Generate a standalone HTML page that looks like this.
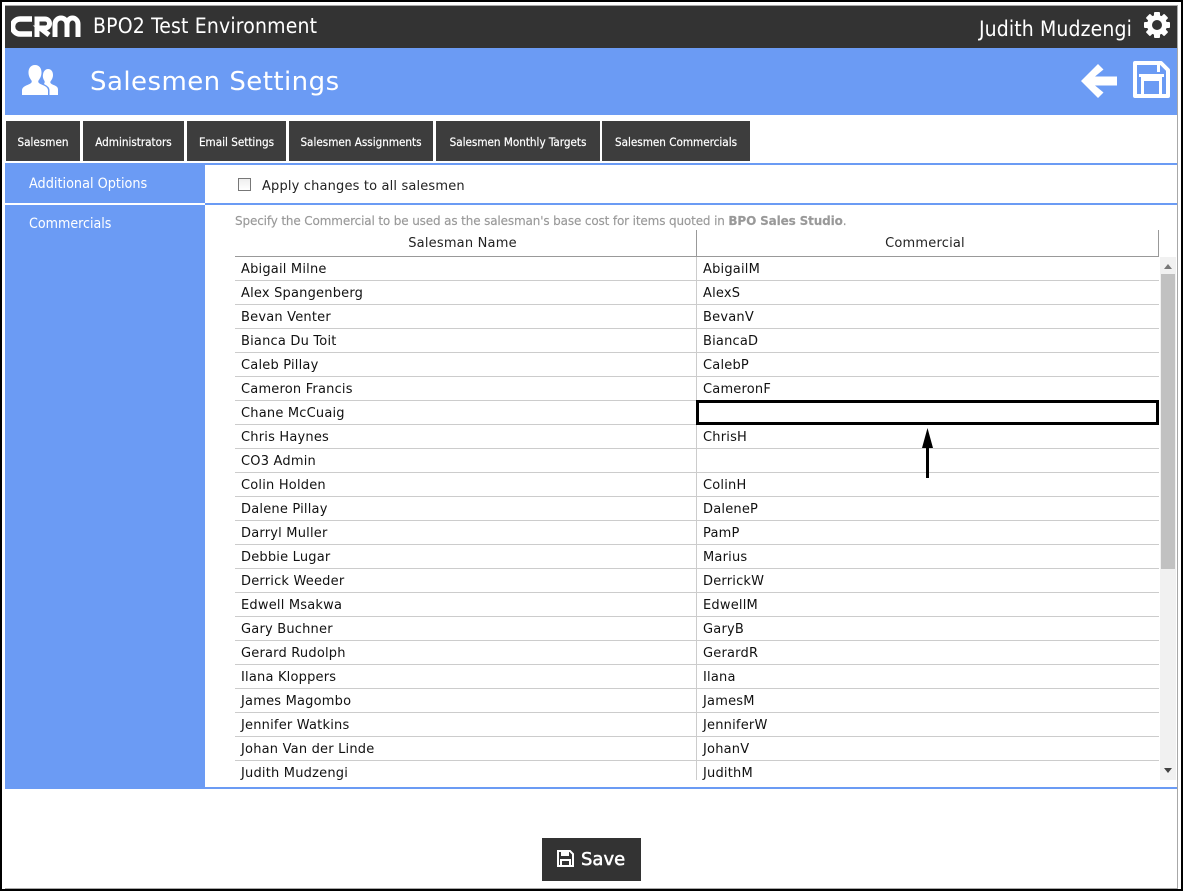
<!DOCTYPE html>
<html><head><meta charset="utf-8">
<style>
html,body{margin:0;padding:0;background:#fff}
body{width:1183px;height:891px;position:relative;overflow:hidden;font-family:"DejaVu Sans",sans-serif;color:#111}
.a{position:absolute;white-space:nowrap}
.tab{position:absolute;top:121px;height:40px;background:#3d3d3d;color:#fff;font-family:"DejaVu Sans Condensed","DejaVu Sans",sans-serif;font-size:11.6px;line-height:43px;text-align:center;white-space:nowrap;-webkit-text-stroke:.2px #fff}
.r{position:absolute;left:235px;width:924px;height:23px;border-bottom:1px solid #ccc;font-size:13px;line-height:26px;letter-spacing:.2px}
.r span{position:absolute;white-space:nowrap}
.r .n{left:6px}.r .c{left:468px}
</style></head>
<body>
<div class="a" style="left:0;top:0;width:1183px;height:891px;box-sizing:border-box;border:2.5px solid #000"></div>
<div class="a" style="left:5px;top:5px;width:1173px;height:884px;box-sizing:border-box;border:1px solid #a8a8a8;border-left:0"></div>

<div class="a" style="left:5px;top:6px;width:1172px;height:42px;background:#333"></div>
<svg class="a" style="left:11px;top:15px" width="72" height="23" viewBox="0 0 72 23"><path d="M21 4H9a7.500 7.500 0 0 0 0 15H21" fill="none" stroke="#fff" stroke-width="5.500"/><path d="M26 22V4H34a4.500 4.500 0 0 1 0 9H29L38 20" fill="none" stroke="#fff" stroke-width="5"/><path d="M44 22V9a6 6 0 0 1 12 0V22M56 9a5.500 6 0 0 1 11 0V22" fill="none" stroke="#fff" stroke-width="5"/></svg>
<div class="a" style="left:93px;top:13px;color:#fff;font-size:21px;line-height:26px;letter-spacing:.17px;font-family:'DejaVu Sans Condensed','DejaVu Sans',sans-serif">BPO2 Test Environment</div>
<div class="a" style="right:51px;top:16px;color:#fff;font-size:21px;line-height:26px;letter-spacing:.12px;font-family:'DejaVu Sans Condensed','DejaVu Sans',sans-serif">Judith Mudzengi</div>
<svg class="a" style="left:1143px;top:11px" width="28" height="28" viewBox="0 0 28 28"><g fill="#fff"><circle cx="14" cy="14" r="10"/><rect x="11" y="1" width="6" height="26" rx="1"/><rect x="11" y="1" width="6" height="26" rx="1" transform="rotate(45 14 14)"/><rect x="11" y="1" width="6" height="26" rx="1" transform="rotate(90 14 14)"/><rect x="11" y="1" width="6" height="26" rx="1" transform="rotate(135 14 14)"/></g><circle cx="14" cy="14" r="5" fill="#333"/></svg>

<div class="a" style="left:5px;top:48px;width:1172px;height:67px;background:#6b9bf4"></div>
<svg class="a" style="left:21px;top:63px" width="38" height="34" viewBox="0 0 38 34"><path fill="#fff" d="M27 6c3.500 0 5 3 5 6 0 3-1.500 5-2.500 6.500-.5 1 0 2 2 3 3 1.300 5.500 2 5.500 5V32H28.500V27c0-3-3-4.500-5.500-6 .5-1 1-2 .5-3-1.200-2-2-4-1.500-6.500C22.500 8 24.500 6 27 6z"/><path fill="#fff" d="M14 2c4.500 0 6.500 3.500 6.500 7.500 0 3.500-1.500 6-3 8-.7 1.300 0 2.700 2.500 3.800 3.500 1.600 7 2.800 7 6.200V32H1v-4.500c0-3.400 3.500-4.600 7-6.200 2.500-1.100 3.200-2.500 2.500-3.800-1.500-2-3-4.500-3-8C7.500 5.500 9.500 2 14 2z"/></svg>
<div class="a" style="left:90px;top:65px;color:#fff;font-size:26px;line-height:34px;letter-spacing:.45px">Salesmen Settings</div>
<svg class="a" style="left:1080px;top:63px" width="38" height="36" viewBox="0 0 38 36"><path fill="#fff" d="M1 18L18 1l5.500 5.500L15 13.500H37v9H15l8.500 7L18 35z"/></svg>
<svg class="a" style="left:1133px;top:61px" width="37" height="37" viewBox="0 0 37 37"><path fill="none" stroke="#fff" stroke-width="4" stroke-linejoin="round" d="M2 2H28L35 9V35H2z"/><path fill="#fff" d="M8 15H29V35H8zM24 4h3v7h-3z"/><path fill="#fff" d="M6 13h25v3H6z"/><rect x="11" y="20" width="15" height="13" fill="#6b9bf4"/></svg>

<div class="tab" style="left:6px;width:74px">Salesmen</div>
<div class="tab" style="left:83px;width:101px">Administrators</div>
<div class="tab" style="left:187px;width:99px">Email Settings</div>
<div class="tab" style="left:289px;width:144px">Salesmen Assignments</div>
<div class="tab" style="left:436px;width:164px">Salesmen Monthly Targets</div>
<div class="tab" style="left:602px;width:148px">Salesmen Commercials</div>

<div class="a" style="left:5px;top:163px;width:1172px;height:2px;background:#6b9bf4"></div>
<div class="a" style="left:5px;top:163px;width:200px;height:625px;background:#6b9bf4"></div>
<div class="a" style="left:5px;top:203px;width:200px;height:2px;background:#fff"></div>
<div class="a" style="left:205px;top:203px;width:972px;height:2px;background:#6b9bf4"></div>
<div class="a" style="left:5px;top:787px;width:1172px;height:2px;background:#6b9bf4"></div>
<div class="a" style="left:29px;top:175px;color:#fff;font-size:14.3px;line-height:18px;font-family:'DejaVu Sans Condensed','DejaVu Sans',sans-serif">Additional Options</div>
<div class="a" style="left:29px;top:215px;color:#fff;font-size:14.1px;line-height:18px;font-family:'DejaVu Sans Condensed','DejaVu Sans',sans-serif">Commercials</div>

<div class="a" style="left:238px;top:178px;width:11px;height:11px;border:1px solid #777;background:linear-gradient(#eee,#fff)"></div>
<div class="a" style="left:262px;top:178px;font-size:13px;line-height:18px;color:#222;letter-spacing:.16px">Apply changes to all salesmen</div>
<div class="a" style="left:235px;top:213px;font-size:12px;line-height:16px;color:#999;letter-spacing:-.14px;-webkit-text-stroke:.15px #999">Specify the Commercial to be used as the salesman's base cost for items quoted in <b>BPO Sales Studio</b>.</div>

<div class="a" style="left:232px;top:234px;width:461px;text-align:center;font-size:13px;line-height:19px;color:#222;letter-spacing:.2px">Salesman Name</div>
<div class="a" style="left:696px;top:234px;width:458px;text-align:center;font-size:13px;line-height:19px;color:#222;letter-spacing:.2px">Commercial</div>
<div class="a" style="left:235px;top:256px;width:924px;height:1px;background:#999"></div>
<div class="a" style="left:696px;top:230px;width:1px;height:26px;background:#999"></div>
<div class="a" style="left:1158px;top:230px;width:1px;height:26px;background:#999"></div>

<div class="r" style="top:257px"><span class="n">Abigail Milne</span><span class="c">AbigailM</span></div>
<div class="r" style="top:281px"><span class="n">Alex Spangenberg</span><span class="c">AlexS</span></div>
<div class="r" style="top:305px"><span class="n">Bevan Venter</span><span class="c">BevanV</span></div>
<div class="r" style="top:329px"><span class="n">Bianca Du Toit</span><span class="c">BiancaD</span></div>
<div class="r" style="top:353px"><span class="n">Caleb Pillay</span><span class="c">CalebP</span></div>
<div class="r" style="top:377px"><span class="n">Cameron Francis</span><span class="c">CameronF</span></div>
<div class="r" style="top:401px"><span class="n">Chane McCuaig</span></div>
<div class="r" style="top:425px"><span class="n">Chris Haynes</span><span class="c">ChrisH</span></div>
<div class="r" style="top:449px"><span class="n">CO3 Admin</span></div>
<div class="r" style="top:473px"><span class="n">Colin Holden</span><span class="c">ColinH</span></div>
<div class="r" style="top:497px"><span class="n">Dalene Pillay</span><span class="c">DaleneP</span></div>
<div class="r" style="top:521px"><span class="n">Darryl Muller</span><span class="c">PamP</span></div>
<div class="r" style="top:545px"><span class="n">Debbie Lugar</span><span class="c">Marius</span></div>
<div class="r" style="top:569px"><span class="n">Derrick Weeder</span><span class="c">DerrickW</span></div>
<div class="r" style="top:593px"><span class="n">Edwell Msakwa</span><span class="c">EdwellM</span></div>
<div class="r" style="top:617px"><span class="n">Gary Buchner</span><span class="c">GaryB</span></div>
<div class="r" style="top:641px"><span class="n">Gerard Rudolph</span><span class="c">GerardR</span></div>
<div class="r" style="top:665px"><span class="n">Ilana Kloppers</span><span class="c">Ilana</span></div>
<div class="r" style="top:689px"><span class="n">James Magombo</span><span class="c">JamesM</span></div>
<div class="r" style="top:713px"><span class="n">Jennifer Watkins</span><span class="c">JenniferW</span></div>
<div class="r" style="top:737px"><span class="n">Johan Van der Linde</span><span class="c">JohanV</span></div>
<div class="r" style="top:761px;height:19px;border:0;overflow:hidden"><span class="n">Judith Mudzengi</span><span class="c">JudithM</span></div>

<div class="a" style="left:696px;top:257px;width:1px;height:523px;background:#ccc"></div>
<div class="a" style="left:696px;top:400px;width:463px;height:25px;box-sizing:border-box;border:3px solid #000;background:#fff"></div>

<svg class="a" style="left:920px;top:428px" width="16" height="50" viewBox="0 0 16 50"><path d="M7.500 0L13 20H9V50H6V20H2z" fill="#000"/></svg>

<div class="a" style="left:1160px;top:257px;width:16px;height:523px;background:#f1f1f1"></div>
<div class="a" style="left:1161px;top:274px;width:14px;height:295px;background:#c1c1c1"></div>
<svg class="a" style="left:1160px;top:257px" width="16" height="523" viewBox="0 0 16 523"><path d="M8 7L12 12H4z" fill="#777"/><path d="M8 516L4 511H12z" fill="#444"/></svg>

<div class="a" style="left:542px;top:838px;width:99px;height:43px;background:#333"></div>
<svg class="a" style="left:556px;top:849px" width="19" height="19" viewBox="0 0 19 19"><path fill="none" stroke="#fff" stroke-width="2" d="M2 2H14L17 5V17H2z"/><path fill="none" stroke="#fff" stroke-width="2" d="M5 17V11H14V17"/><path fill="#fff" d="M5 2h8v5H5z"/></svg>
<div class="a" style="left:581px;top:849px;color:#fff;font-size:18px;line-height:22px;-webkit-text-stroke:.5px #fff">Save</div>
</body></html>
